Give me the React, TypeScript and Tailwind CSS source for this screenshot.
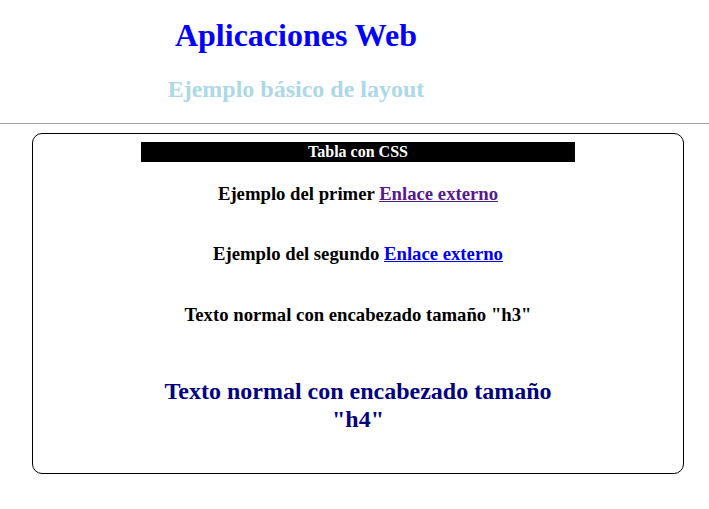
export default function App() {
  return (
    <div className="min-h-[509px] bg-white font-['Liberation_Serif',serif]">
      {/* Header */}
      <header className="w-[592px] pt-[15px] text-center">
        <h1 className="text-[32px] font-bold leading-[40px] text-[#0000ff]">Aplicaciones Web</h1>
        <h2 className="mt-[19px] text-[24px] font-bold leading-[30px] text-[#add8e6]">
          Ejemplo básico de layout
        </h2>
      </header>

      <hr className="mt-[19px] border-t border-[#a0a0a0]" />

      {/* Box */}
      <div className="ml-[32px] mr-[25px] mt-[9px] h-[341px] rounded-[10px] border border-black pt-[8px]">
        <div className="mx-auto w-[434px] bg-black text-center text-[16px] font-bold leading-[20px] text-white">
          Tabla con CSS
        </div>
        <div className="text-center text-[18.72px] font-bold">
          <p className="mt-[20px] leading-[24px] text-black">
            Ejemplo del primer{" "}
            <a href="#" className="text-[#551a8b] underline">
              Enlace externo
            </a>
          </p>
          <p className="mt-[36px] leading-[24px] text-black">
            Ejemplo del segundo{" "}
            <a href="#" className="text-[#0000ee] underline">
              Enlace externo
            </a>
          </p>
          <p className="mt-[37px] leading-[24px] text-black">Texto normal con encabezado tamaño "h3"</p>
          <p className="mx-auto mt-[50px] w-[420px] text-[24px] leading-[28px] text-[#000080]">
            Texto normal con encabezado tamaño "h4"
          </p>
        </div>
      </div>
    </div>
  );
}
